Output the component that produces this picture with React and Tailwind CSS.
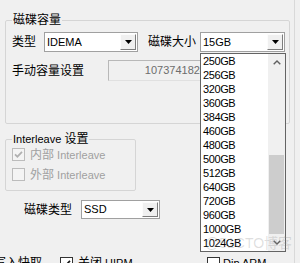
import React from 'react';

const sizes = ['250GB', '256GB', '320GB', '360GB', '384GB', '460GB', '480GB', '500GB', '512GB', '640GB', '720GB', '960GB', '1000GB', '1024GB'];

const Arrow = () => (
  <svg width="7" height="4" viewBox="0 0 7 4">
    <path d="M0 0h7L3.5 4z" fill="#000" />
  </svg>
);

const Combo = ({ value, className = '' }) => (
  <div className={`flex border border-[#a0a0a0] bg-white ${className}`}>
    <div className="flex-1 flex items-center pl-[2px] text-[11px] leading-none">{value}</div>
    <div className="m-[1px] w-[16px] flex items-center justify-center bg-[#f0f0f0] border-t border-l border-[#fcfcfc] border-b-[#7d7d7d] border-r-[#7d7d7d] border-b border-r">
      <Arrow />
    </div>
  </div>
);

const CheckBox = ({ checked, disabled }) => (
  <span
    className={`w-[13px] h-[13px] shrink-0 border flex items-center justify-center ${
      disabled ? 'border-[#bcbcbc] bg-[#f4f4f4]' : 'border-[#333] bg-white'
    }`}
  >
    {checked && (
      <svg width="9" height="9" viewBox="0 0 9 9">
        <path d="M1 4.3l2.4 2.4L8 1.8" fill="none" stroke={disabled ? '#b0b0b0' : '#111'} strokeWidth="1.7" />
      </svg>
    )}
  </span>
);

const Chevron = ({ up }) => (
  <svg width="8" height="5" viewBox="0 0 8 5">
    <path d={up ? 'M0.7 4.3L4 1l3.3 3.3' : 'M0.7 0.7L4 4l3.3-3.3'} fill="none" stroke="#606060" strokeWidth="1.4" />
  </svg>
);

export default function App() {
  return (
    <div className="relative w-[300px] h-[263px] overflow-hidden bg-[#f0f0f0] text-black text-[11px] font-['Liberation_Sans','Noto_Sans_CJK_SC',sans-serif]">
      <div className="w-[295px] h-full border-r border-[#d9d9d9] pl-[5px] pt-[13px]">
        <fieldset className="w-[285px] h-[111px] border border-[#d5d5d5] rounded-[2px] pl-[6px] pt-[5px]">
          <legend className="px-[1px] text-[12px] leading-[14px]">磁碟容量</legend>
          <div className="flex items-center h-[20px]">
            <span className="w-[32px] text-[12px] leading-[14px]">类型</span>
            <Combo value="IDEMA" className="w-[94px] h-[20px]" />
            <span className="ml-[10px] w-[52px] text-[12px] leading-[14px]">磁碟大小</span>
            <Combo value="15GB" className="w-[85px] h-[20px]" />
          </div>
          <div className="mt-[8px] flex items-center h-[21px]">
            <span className="w-[96px] text-[12px] leading-[14px]">手动容量设置</span>
            <div className="w-[102px] h-[21px] flex items-center justify-end pr-[3px] bg-[#f0f0f0] border border-[#b8b8b8] border-b-[#e0e0e0] border-r-[#e0e0e0] text-[#6d6d6d]">
              1073741824
            </div>
          </div>
        </fieldset>

        <fieldset className="mt-[8px] w-[131px] h-[59px] border border-[#d5d5d5] rounded-[2px] pl-[6px] pt-[2px]">
          <legend className="px-[1px] leading-[14px]">
            <span className="text-[11px]">Interleave</span> <span className="text-[12px]">设置</span>
          </legend>
          <div className="flex flex-col gap-[7px] text-[#a0a0a0]">
            <div className="flex items-center gap-[5px] h-[13px]">
              <CheckBox checked disabled />
              <span>
                <span className="text-[12px]">内部</span> Interleave
              </span>
            </div>
            <div className="flex items-center gap-[5px] h-[13px]">
              <CheckBox disabled />
              <span>
                <span className="text-[12px]">外部</span> Interleave
              </span>
            </div>
          </div>
        </fieldset>

        <div className="mt-[9px] ml-[19px] flex items-center h-[19px]">
          <span className="w-[57px] text-[12px] leading-[14px]">磁碟类型</span>
          <Combo value="SSD" className="w-[79px] h-[19px]" />
        </div>

        <div className="mt-[37px] flex items-center h-[14px] whitespace-nowrap">
          <span className="ml-[-11px] w-[48px] text-[12px] leading-[14px]">写入快取</span>
          <span className="ml-[18px]">
            <CheckBox checked />
          </span>
          <span className="ml-[5px] w-[124px]">
            <span className="text-[12px]">关闭</span> HIPM
          </span>
          <span className="ml-[5px]">
            <CheckBox />
          </span>
          <span className="ml-[3px]">Dip ARM</span>
        </div>
      </div>

      <div className="absolute left-[200px] top-[53px] w-[86px] h-[199px] bg-white border border-[#646464] flex">
        <div className="flex-1 flex flex-col">
          {sizes.map((s) => (
            <div key={s} className="h-[14px] flex items-center pl-[2px] tracking-[-0.4px] leading-none">
              {s}
            </div>
          ))}
        </div>
        <div className="w-[17px] h-full bg-[#f0f0f0] flex flex-col">
          <div className="h-[17px] flex items-center justify-center">
            <Chevron up />
          </div>
          <div className="flex-1 pt-[84px] px-[1px]">
            <div className="h-[79px] bg-[#cdcdcd]" />
          </div>
          <div className="h-[17px] flex items-center justify-center">
            <Chevron />
          </div>
        </div>
      </div>

      <div className="absolute left-[205px] top-[235px] text-[14px] leading-[16px] text-[rgba(140,140,140,0.28)]">
        @51CTO博客
      </div>
    </div>
  );
}
